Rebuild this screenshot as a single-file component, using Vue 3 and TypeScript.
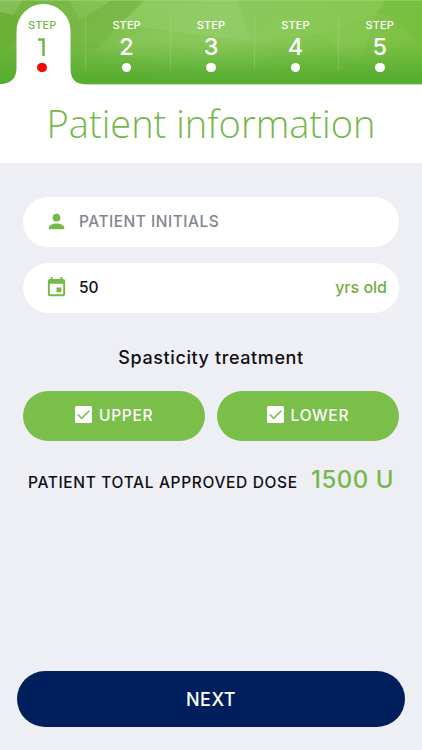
<script setup lang="ts">
import { ref } from 'vue'

const steps: number[] = [1, 2, 3, 4, 5]
const current = ref(1)
const initials = ref('')
const age = ref('50')
const regions = ref([
  { name: 'UPPER', checked: true },
  { name: 'LOWER', checked: true },
])
</script>

<template>
  <main class="screen">
    <header class="header">
      <svg class="backdrop" viewBox="0 0 422 85" aria-hidden="true">
        <defs>
          <linearGradient id="base" x1="0" x2="1" y1="0" y2="0">
            <stop offset="0" stop-color="#70b33b" />
            <stop offset=".25" stop-color="#80c14d" />
            <stop offset=".52" stop-color="#8bc95c" />
            <stop offset="1" stop-color="#7bc142" />
          </linearGradient>
          <linearGradient id="shade" x1="0" x2="0" y1="0" y2="1">
            <stop offset=".48" stop-color="#57ad30" stop-opacity="0" />
            <stop offset=".88" stop-color="#57ad30" stop-opacity=".9" />
            <stop offset="1" stop-color="#57ad30" />
          </linearGradient>
        </defs>
        <rect width="422" height="85" fill="url(#base)" />
        <path d="M0 0H23L13 15 0 12Z" fill="#9bcf75" opacity=".45" />
        <path d="M23 0H68L80 19 48 12 13 15Z" fill="#78b844" opacity=".5" />
        <path d="M0 12 17 15 18 40 0 50Z" fill="#60a82e" opacity=".3" />
        <path d="M68 0H112L80 20Z" fill="#9bd071" opacity=".22" />
        <path d="M112 0H145L120 24 80 20Z" fill="#6aac3b" opacity=".35" />
        <path d="M70 18 120 24 98 48 70 49Z" fill="#71b440" opacity=".5" />
        <path d="M145 0H237L252 41 190 34 120 24Z" fill="#a2d67d" opacity=".3" />
        <path d="M145 30 190 34 213 66 158 65 98 48Z" fill="#92cc62" opacity=".35" />
        <path d="M237 0H287L252 41Z" fill="#8dc962" opacity=".4" />
        <path d="M287 0H386L377 13 328 33 252 41Z" fill="#92ce5e" opacity=".4" />
        <path d="M386 0H422V45L390 16 377 13Z" fill="#6fbc38" opacity=".35" />
        <path d="M328 33 377 13 359 63 338 55Z" fill="#97d064" opacity=".2" />
        <rect width="422" height="85" fill="url(#shade)" />
        <path d="M0 .5H422" stroke="#a9d985" opacity=".45" />
        <path d="M85.5 16V70M170.5 16V70M254.5 16V70M338.5 16V70" stroke="#b4df92" opacity=".3" />
        <path d="M0 84.5H422" stroke="#c4e4b2" />
        <path d="M0 85V84H3Q16.500 82 16.500 68V31A27 27 0 0 1 70.500 31V68Q70.500 84 84 84V85Z" fill="#fff" />
      </svg>
      <nav class="steps">
        <button v-for="step in steps" :key="step" class="step" :class="{ active: step === current }">
          <span class="step-label">STEP</span>
          <span class="step-number">
            <svg v-if="step === 1" class="numeral" viewBox="0 0 10 18" aria-label="1">
              <path d="M1 1.500H6.500V18" fill="none" stroke="currentColor" stroke-width="2.500" />
            </svg>
            <template v-else>{{ step }}</template>
          </span>
          <span class="dot"></span>
        </button>
      </nav>
    </header>

    <h1 class="title">Patient information</h1>

    <form class="form" @submit.prevent>
      <label class="field">
        <svg class="icon person" viewBox="0 0 24 24">
          <path d="M12 12a4 4 0 1 0 0-8 4 4 0 0 0 0 8Zm0 2c-2.670 0-8 1.340-8 4v2h16v-2c0-2.660-5.330-4-8-4Z" />
        </svg>
        <input v-model="initials" class="initials" placeholder="PATIENT INITIALS" />
      </label>
      <label class="field">
        <svg class="icon" viewBox="0 0 24 24">
          <path d="M17 12h-5v5h5v-5ZM16 1v2H8V1H6v2H5c-1.110 0-1.990.9-1.990 2L3 19a2 2 0 0 0 2 2h14c1.100 0 2-.9 2-2V5c0-1.100-.9-2-2-2h-1V1h-2Zm3 18H5V8h14v11Z" />
        </svg>
        <input v-model="age" class="age" />
        <span class="unit">yrs old</span>
      </label>

      <h2 class="subtitle">Spasticity treatment</h2>

      <div class="choices">
        <button v-for="region in regions" :key="region.name" class="choice" type="button" @click="region.checked = !region.checked">
          <svg class="check" viewBox="0 0 17 17">
            <rect width="17" height="17" rx="1.500" fill="#fff" />
            <path v-if="region.checked" d="M2.800 8.500 6.700 12.300 14.300 4.700" fill="none" stroke="#7bbf4b" stroke-width="1.600" />
          </svg>
          <span>{{ region.name }}</span>
        </button>
      </div>

      <p class="dose">
        <span class="dose-label">PATIENT TOTAL APPROVED DOSE</span>
        <strong class="dose-value">1500 U</strong>
      </p>

      <button class="next" type="submit">NEXT</button>
    </form>
  </main>
</template>

<style>
body {
  margin: 0;
  background: #eeeff4;
}
</style>

<style scoped>
.screen {
  box-sizing: border-box;
  display: flex;
  flex-direction: column;
  height: 750px;
  background: #eeeff4;
  font-family: Inter, "Liberation Sans", sans-serif;
  color: #101014;
}

button,
input {
  padding: 0;
  border: 0;
  background: none;
  font: inherit;
  color: inherit;
}

.header {
  position: relative;
  height: 85px;
  flex: none;
}

.backdrop {
  position: absolute;
  inset: 0;
  width: 100%;
  height: 85px;
}

.steps {
  position: relative;
  display: grid;
  grid-template-columns: repeat(5, 1fr);
}

.step {
  display: flex;
  flex-direction: column;
  align-items: center;
  padding-top: 18px;
  color: #fff;
}

.step-label {
  font-size: 11px;
  line-height: 14px;
  font-weight: 500;
  letter-spacing: 0.1px;
}

.step-number {
  display: flex;
  align-items: center;
  height: 30px;
  font-size: 23.500px;
  line-height: 30px;
  font-weight: 500;
}

.numeral {
  width: 10px;
  height: 18px;
}

.dot {
  width: 9.500px;
  height: 9.500px;
  margin-top: 0.500px;
  border-radius: 50%;
  background: #fff;
}

.active {
  color: #70b943;
}

.active .dot {
  background: #f20808;
}

.title {
  flex: none;
  margin: 0;
  height: 78px;
  background: #fff;
  color: #74b84a;
  font: 300 38px/77px "Open Sans", sans-serif;
  text-align: center;
}

.form {
  flex: 1;
  display: flex;
  flex-direction: column;
  padding: 34px 23px 23px;
}

.field {
  display: flex;
  align-items: center;
  box-sizing: border-box;
  height: 49.500px;
  margin-bottom: 16.500px;
  padding: 0 12px 0 22px;
  border-radius: 25px;
  background: #fff;
}

.icon {
  flex: none;
  width: 23px;
  height: 23px;
  margin-right: 11px;
  fill: #75b946;
}

.field input {
  flex: 1;
  min-width: 0;
  outline: none;
  font-size: 15.500px;
  font-weight: 500;
}

.field .initials {
  letter-spacing: 0.5px;
}

.initials::placeholder {
  color: #85858f;
  opacity: 1;
}

.unit {
  margin-top: -1px;
  color: #70ad43;
  font-size: 16px;
  font-weight: 500;
}

.subtitle {
  margin: 17px 0 0;
  font-size: 18px;
  line-height: 24px;
  font-weight: 500;
  letter-spacing: 0.6px;
  text-align: center;
}

.choices {
  display: grid;
  grid-template-columns: 1fr 1fr;
  gap: 11.500px;
  margin-top: 21px;
}

.choice {
  display: flex;
  align-items: center;
  justify-content: center;
  gap: 7px;
  height: 49.500px;
  border-radius: 25px;
  background: #7bbf4b;
  color: #fff;
  font-size: 15.500px;
  font-weight: 500;
  letter-spacing: 0.7px;
}

.check {
  width: 17px;
  height: 17px;
  margin-top: -2px;
}

.dose {
  display: flex;
  align-items: baseline;
  justify-content: space-between;
  margin: 22px 5px 0 5px;
  line-height: 33px;
  white-space: nowrap;
}

.dose-label {
  font-size: 15.500px;
  font-weight: 500;
  letter-spacing: 0.65px;
}

.dose-value {
  color: #76b94a;
  font-size: 24px;
  font-weight: 500;
  letter-spacing: 0.5px;
}

.next {
  height: 56px;
  margin: auto -6px 0;
  border-radius: 28px;
  background: #001f5c;
  color: #fff;
  font-size: 18px;
  font-weight: 500;
  letter-spacing: 0.5px;
}
</style>
